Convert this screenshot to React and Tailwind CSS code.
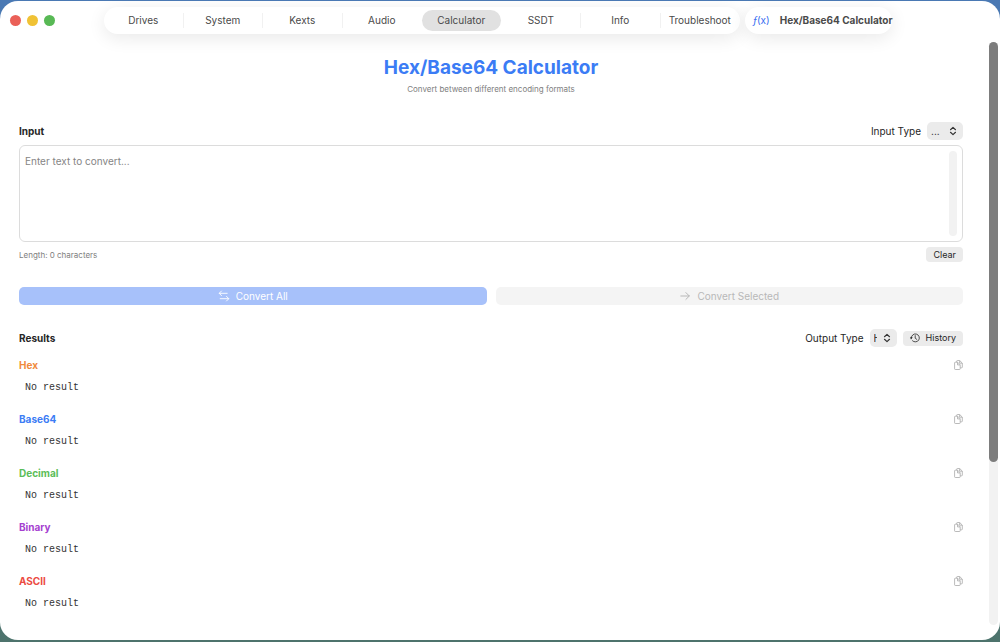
import { useState } from 'react'

const TABS = ['Drives', 'System', 'Kexts', 'Audio', 'Calculator', 'SSDT', 'Info', 'Troubleshoot']

const RESULTS = [
  { label: 'Hex', color: 'text-[#f08a3c]' },
  { label: 'Base64', color: 'text-[#3b7cf5]' },
  { label: 'Decimal', color: 'text-[#5bbd58]' },
  { label: 'Binary', color: 'text-[#a63fd0]' },
  { label: 'ASCII', color: 'text-[#ec4a42]' },
]

function ChevronsIcon() {
  return (
    <svg viewBox="0 0 8 10" className="pointer-events-none absolute right-[6px] h-[10px] w-[8px]" fill="none" stroke="#333" strokeWidth="1.2" strokeLinecap="round" strokeLinejoin="round">
      <path d="M1.5 3.7 4 1.4l2.5 2.3M1.5 6.3 4 8.6l2.5-2.3" />
    </svg>
  )
}

function SwapIcon() {
  return (
    <svg viewBox="0 0 12 12" className="h-3 w-3" fill="none" stroke="currentColor" strokeWidth="0.9" strokeLinecap="round" strokeLinejoin="round">
      <path d="M3.5 1 1.2 3.3l2.3 2.3M1.4 3.3h7.8M8.5 6.4l2.3 2.3L8.5 11M10.6 8.7H2.2" />
    </svg>
  )
}

function ArrowIcon() {
  return (
    <svg viewBox="0 0 12 12" className="h-3 w-3" fill="none" stroke="currentColor" strokeWidth="1" strokeLinecap="round" strokeLinejoin="round">
      <path d="M1.8 6h8.5M6.9 2.6 10.3 6 6.9 9.4" />
    </svg>
  )
}

function HistoryIcon() {
  return (
    <svg viewBox="0 0 10 10" className="h-[10px] w-[10px]" fill="none" stroke="currentColor" strokeWidth="0.8" strokeLinecap="round" strokeLinejoin="round">
      <path d="M1.3 5a4 4 0 1 1 1.2 2.8" />
      <path d="M5.2 2.6v2.6l1.6 1.2" />
      <path d="M0.3 4.4h2L1.3 5.9z" fill="currentColor" strokeWidth="0.4" />
    </svg>
  )
}

function CopyIcon() {
  return (
    <svg viewBox="0 0 9 10" className="h-[10px] w-[9px]" fill="none" stroke="currentColor" strokeWidth="0.8" strokeLinejoin="round">
      <path d="M2.7 2.2V1.2a.7.7 0 0 1 .7-.7h2.3l2.6 2.6v4a.7.7 0 0 1-.7.7H6.3" />
      <path d="M.6 2.9a.7.7 0 0 1 .7-.7h2.3l2.6 2.6v4a.7.7 0 0 1-.7.7H1.3a.7.7 0 0 1-.7-.7z" />
      <path d="M3.5 2.4v2.5H6M5.6.7v2.5h2.5" />
    </svg>
  )
}

function Toolbar({ active, onSelect }) {
  return (
    <header className="flex shrink-0 items-center pt-[6px] pr-[108px] pl-[10px]">
      <div className="flex w-[94px] gap-[6px]">
        <button type="button" aria-label="Close" className="h-[11px] w-[11px] rounded-full bg-[#ea6058]" />
        <button type="button" aria-label="Minimize" className="h-[11px] w-[11px] rounded-full bg-[#f0c235]" />
        <button type="button" aria-label="Zoom" className="h-[11px] w-[11px] rounded-full bg-[#58b955]" />
      </div>
      <nav className="flex h-[27px] flex-1 items-center rounded-full bg-white shadow-[0_4px_18px_rgba(0,0,0,0.09)]">
        {TABS.map((tab, i) => (
          <div key={tab} className="flex h-full flex-1 items-center">
            <button
              type="button"
              onClick={() => onSelect(tab)}
              className={`h-[21px] flex-1 rounded-full pb-px text-center text-[#4a4a4a] ${tab === active ? 'bg-[#e1e1e1]' : ''}`}
            >
              {tab}
            </button>
            <span
              className={`h-[15px] w-px ${
                i === TABS.length - 1 || tab === active || TABS[i + 1] === active ? '' : 'bg-[#f1f1f1]'
              }`}
            />
          </div>
        ))}
      </nav>
      <div className="ml-[5px] flex h-[27px] w-[147px] items-center gap-[10px] rounded-full bg-white pb-px pl-2 shadow-[0_4px_18px_rgba(0,0,0,0.09)]">
        <span className="w-[17px] text-[#3b6ff0]"><i>ƒ</i>(x)</span>
        <span className="font-bold whitespace-nowrap text-[#4a4a4a]">Hex/Base64 Calculator</span>
      </div>
    </header>
  )
}

function Picker({ id, label, width, padding, children }) {
  return (
    <div className="flex items-center gap-[6px]">
      <label htmlFor={id}>{label}</label>
      <div className="relative flex items-center">
        <select id={id} className={`h-[18px] appearance-none rounded-[5px] bg-[#ebebeb] ${width} ${padding}`}>
          {children}
        </select>
        <ChevronsIcon />
      </div>
    </div>
  )
}

function ResultRow({ label, color }) {
  return (
    <li className="flex flex-col gap-[9px]">
      <div className="flex h-[14px] items-center justify-between">
        <h3 className={`font-bold ${color}`}>{label}</h3>
        <button type="button" disabled aria-label={`Copy ${label}`} className="text-[#a8a8a8]">
          <CopyIcon />
        </button>
      </div>
      <p className="pl-[6px] font-['Liberation_Mono',monospace] text-[#333]">No result</p>
    </li>
  )
}

export default function App() {
  const [tab, setTab] = useState('Calculator')
  const [text, setText] = useState('')

  return (
    <div className="h-screen bg-linear-to-b from-[#4a79b4] to-[#4d736c] pt-px pb-[2px] font-['Inter',sans-serif] text-[10px] leading-[14px] text-[#262626]">
      <div className="flex h-full flex-col overflow-hidden rounded-[18px] bg-white">
        <Toolbar active={tab} onSelect={setTab} />

        <div className="flex min-h-0 flex-1 pt-2">
          <main className="flex-1 overflow-hidden pr-[26px] pl-[19px]">
            <div className="pt-[14px] text-center">
              <h1 className="text-[19px] leading-[24px] font-bold text-[#3b7cf5]">Hex/Base64 Calculator</h1>
              <p className="mt-[3px] text-[8px] leading-[12px] text-[#808080]">Convert between different encoding formats</p>
            </div>

            <section className="mt-[27px]">
              <div className="flex items-center justify-between">
                <h2 className="font-bold">Input</h2>
                <Picker id="input-type" label="Input Type" width="w-[36px]" padding="pl-[4px] pr-[18px]">
                  <option>...</option>
                </Picker>
              </div>
              <div className="mt-[5px] flex h-[97px] rounded-[6px] border border-[#dcdcdc] p-[5px]">
                <textarea
                  aria-label="Input"
                  value={text}
                  onChange={(e) => setText(e.target.value)}
                  placeholder="Enter text to convert..."
                  className="flex-1 resize-none pt-[3px] outline-none placeholder:text-[#858585]"
                />
                <div className="w-2 rounded-full bg-[#f2f2f2]" />
              </div>
              <div className="mt-[5px] flex items-center justify-between">
                <p className="text-[8px] text-[#808080]">Length: {text.length} characters</p>
                <button type="button" onClick={() => setText('')} className="h-[15px] rounded-[4px] bg-[#ebebeb] px-[7px] text-[9px]">
                  Clear
                </button>
              </div>
            </section>

            <div className="mt-[25px] grid grid-cols-2 gap-[9px]">
              <button type="button" disabled={!text} className="flex h-[18px] items-center justify-center gap-[6px] rounded-[5px] bg-[#a7c1fa] text-white">
                <SwapIcon />
                Convert All
              </button>
              <button type="button" disabled={!text} className="flex h-[18px] items-center justify-center gap-[6px] rounded-[5px] bg-[#f4f4f4] text-[#b8b8b8]">
                <ArrowIcon />
                Convert Selected
              </button>
            </div>

            <section className="mt-6">
              <div className="flex items-center justify-between">
                <h2 className="font-bold">Results</h2>
                <div className="flex items-center gap-[6px]">
                  <Picker id="output-type" label="Output Type" width="w-[27px]" padding="pl-[4px] pr-[20px]">
                    <option>Hex</option>
                    <option>Base64</option>
                    <option>Decimal</option>
                    <option>Binary</option>
                    <option>ASCII</option>
                  </Picker>
                  <button type="button" className="flex h-[15px] items-center gap-[6px] rounded-[4px] bg-[#ebebeb] px-[7px] text-[9px]">
                    <HistoryIcon />
                    History
                  </button>
                </div>
              </div>
              <ul className="mt-[11px] flex flex-col gap-[17px]">
                {RESULTS.map((r) => (
                  <ResultRow key={r.label} {...r} />
                ))}
              </ul>
            </section>
          </main>

          <div className="mr-[2px] mb-[15px] w-[9px] rounded-full bg-[#f2f2f2]">
            <div className="h-[72%] rounded-full bg-[#7d7d7d]" />
          </div>
        </div>
      </div>
    </div>
  )
}
